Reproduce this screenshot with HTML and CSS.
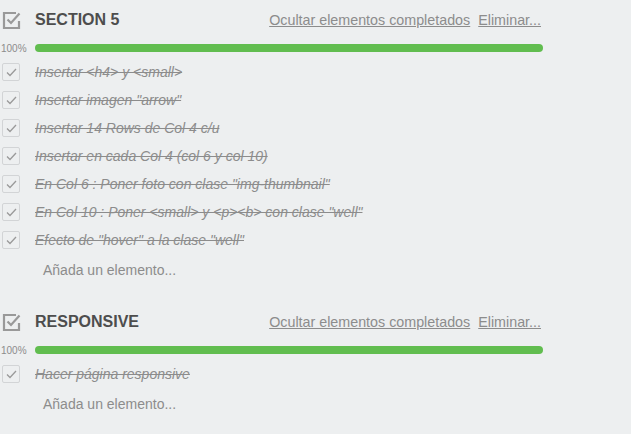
FILE: index.html
```html
<!DOCTYPE html>
<html>
<head>
<meta charset="utf-8">
<link rel="stylesheet" href="styles.css">
</head>
<body>
<div class="checklist">
  <div class="cl-head">
    <svg class="cl-icon" width="20" height="20" viewBox="0 0 20 20"><path d="M15 3H3V18H18V11" fill="none" stroke="#999" stroke-width="2.2"/><path d="M6.5 9.5L10 13L18.5 3.5" fill="none" stroke="#999" stroke-width="2.2"/></svg>
    <h3 class="cl-title">SECTION 5</h3>
    <div class="cl-links"><a href="#">Ocultar elementos completados</a><a href="#">Eliminar...</a></div>
  </div>
  <div class="cl-progress"><span class="pct">100%</span><div class="bar"><div class="fill"></div></div></div>
  <ul class="items">
    <li><span class="cb"><svg width="11" height="9" viewBox="0 0 11 9"><path d="M1 4.5L4 7.5L10 1" fill="none" stroke="#9a9a9a" stroke-width="1.3"/></svg></span><span class="txt">Insertar &lt;h4&gt; y &lt;small&gt;</span></li>
    <li><span class="cb"><svg width="11" height="9" viewBox="0 0 11 9"><path d="M1 4.5L4 7.5L10 1" fill="none" stroke="#9a9a9a" stroke-width="1.3"/></svg></span><span class="txt">Insertar imagen "arrow"</span></li>
    <li><span class="cb"><svg width="11" height="9" viewBox="0 0 11 9"><path d="M1 4.5L4 7.5L10 1" fill="none" stroke="#9a9a9a" stroke-width="1.3"/></svg></span><span class="txt">Insertar 14 Rows de Col 4 c/u</span></li>
    <li><span class="cb"><svg width="11" height="9" viewBox="0 0 11 9"><path d="M1 4.5L4 7.5L10 1" fill="none" stroke="#9a9a9a" stroke-width="1.3"/></svg></span><span class="txt">Insertar en cada Col 4 (col 6 y col 10)</span></li>
    <li><span class="cb"><svg width="11" height="9" viewBox="0 0 11 9"><path d="M1 4.5L4 7.5L10 1" fill="none" stroke="#9a9a9a" stroke-width="1.3"/></svg></span><span class="txt">En Col 6 : Poner foto con clase "img-thumbnail"</span></li>
    <li><span class="cb"><svg width="11" height="9" viewBox="0 0 11 9"><path d="M1 4.5L4 7.5L10 1" fill="none" stroke="#9a9a9a" stroke-width="1.3"/></svg></span><span class="txt">En Col 10 : Poner &lt;small&gt; y &lt;p&gt;&lt;b&gt; con clase "well"</span></li>
    <li><span class="cb"><svg width="11" height="9" viewBox="0 0 11 9"><path d="M1 4.5L4 7.5L10 1" fill="none" stroke="#9a9a9a" stroke-width="1.3"/></svg></span><span class="txt">Efecto de "hover" a la clase "well"</span></li>
  </ul>
  <div class="add">Añada un elemento...</div>
</div>
<div class="checklist">
  <div class="cl-head">
    <svg class="cl-icon" width="20" height="20" viewBox="0 0 20 20"><path d="M15 3H3V18H18V11" fill="none" stroke="#999" stroke-width="2.2"/><path d="M6.5 9.5L10 13L18.5 3.5" fill="none" stroke="#999" stroke-width="2.2"/></svg>
    <h3 class="cl-title">RESPONSIVE</h3>
    <div class="cl-links"><a href="#">Ocultar elementos completados</a><a href="#">Eliminar...</a></div>
  </div>
  <div class="cl-progress"><span class="pct">100%</span><div class="bar"><div class="fill"></div></div></div>
  <ul class="items">
    <li><span class="cb"><svg width="11" height="9" viewBox="0 0 11 9"><path d="M1 4.5L4 7.5L10 1" fill="none" stroke="#9a9a9a" stroke-width="1.3"/></svg></span><span class="txt">Hacer página responsive</span></li>
  </ul>
  <div class="add">Añada un elemento...</div>
</div>
</body>
</html>
```
FILE: styles.css
```css
html, body {
  margin: 0;
  background: #edeff0;
}
body {
  font-family: "Liberation Sans", Arial, sans-serif;
  color: #8c8c8c;
  padding: 0 0 0 1px;
}
.checklist {
  width: 542px;
  margin-bottom: 24px;
}
.cl-head {
  display: flex;
  align-items: center;
  height: 24px;
  margin-top: 8px;
}
.cl-icon {
  display: block;
  margin: 0 14px 0 0;
}
.cl-title {
  margin: 0;
  font-size: 16px;
  font-weight: bold;
  color: #4d4d4d;
  flex: 1;
}
.cl-links {
  display: flex;
  gap: 8px;
  font-size: 14.3px;
  padding-right: 2px;
}
.cl-links a {
  color: #8c8c8c;
  text-decoration: underline;
}
.cl-progress {
  display: flex;
  align-items: center;
  height: 16px;
  margin-top: 8px;
}
.pct {
  width: 34px;
  font-size: 10px;
  color: #8c8c8c;
}
.bar {
  flex: 1;
  height: 8px;
  border-radius: 4px;
  background: #dcdfe1;
  overflow: hidden;
}
.fill {
  height: 100%;
  width: 100%;
  background: #61bd4f;
}
.items {
  list-style: none;
  margin: 2px 0 0;
  padding: 0;
}
.items li {
  display: flex;
  align-items: center;
  height: 28px;
}
.cb {
  box-sizing: border-box;
  width: 18px;
  height: 18px;
  border: 1px solid #d2d4d6;
  border-radius: 2px;
  display: flex;
  align-items: center;
  justify-content: center;
  margin: 0 15px 0 1px;
}
.cb svg { display: block; }
.txt {
  font-size: 14px;
  font-style: italic;
  text-decoration: line-through;
  color: #8c8c8c;
}
.add {
  font-size: 14px;
  color: #8c8c8c;
  padding-left: 42px;
  height: 32px;
  line-height: 32px;
}
```
